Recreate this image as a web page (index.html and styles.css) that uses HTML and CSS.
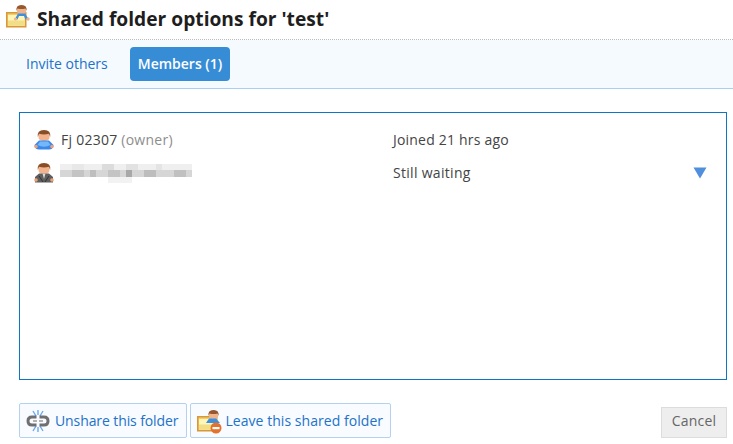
FILE: index.html
```html
<!DOCTYPE html>
<html lang="en">
<head>
<meta charset="utf-8">
<title>Shared folder options</title>
<link rel="stylesheet" href="styles.css">
</head>
<body>
<svg width="0" height="0" class="defs">
  <defs>
    <g id="folder">
      <rect x="0.75" y="0.75" width="19" height="14" fill="#f6cf68" stroke="#d8973a" stroke-width="1.5"/>
      <rect x="2" y="3" width="16.5" height="10.5" fill="#fdf6b8"/>
      <rect x="2" y="8.5" width="16.5" height="5" fill="#f2de86"/>
    </g>
    <g id="head">
      <path d="M1 4.5 Q1 0.5 5.5 0.5 T10 4.5 V6 Q10 9.5 5.5 9.5 T1 6Z" fill="#f0b48c"/>
      <path d="M0.5 6 Q-0.5 0 5.5 0 T10.5 6 L9.5 3.4 Q5.5 4.6 1.5 3.4Z" fill="#96562e"/>
    </g>
    <g id="avatar-head">
      <path d="M4.5 4.5 Q4.5 0.5 10 0.5 T15.5 4.5 V7 Q15.5 11 10 11 T4.5 7Z" fill="#f1b48c"/>
      <path d="M3.8 7 Q2.8 0 10 0 T16.2 7 L15 3.8 Q10 5.4 5 3.8Z" fill="#8a4e26"/>
    </g>
  </defs>
</svg>
<div class="dialog">
  <header class="head">
    <svg class="head-icon" width="24" height="24" viewBox="0 0 24 24">
      <use href="#folder" y="8"/>
      <use href="#head" x="10" y="1"/>
      <path d="M9.5 14 L12 9.5 H19 L22 14 V15.5 H19.5 L18 12 H13 L11.5 15.5 H9.5Z" fill="#3d8fe0"/>
      <circle cx="22" cy="15" r="1.7" fill="#f0b48c"/>
      <circle cx="9.5" cy="15" r="1.6" fill="#f0b48c"/>
    </svg>
    <h1 class="title">Shared folder options for 'test'</h1>
  </header>
  <nav class="tabs">
    <a class="tab">Invite others</a>
    <a class="tab tab-active">Members (1)</a>
  </nav>
  <main class="panel-wrap">
    <section class="panel">
      <div class="row row-first">
        <span class="who">
          <svg class="avatar" width="20" height="20" viewBox="0 0 20 20">
            <use href="#avatar-head"/>
            <path d="M5 10.5 H15 L19.5 15 Q19 19.5 15 19.5 H5 Q1 19.5 0.5 15Z" fill="#3b88ea"/>
            <path d="M6 11.5 H14 L16.5 15 Q10 18.5 3.5 15Z" fill="#72b8fb"/>
            <circle cx="2" cy="16.5" r="1.8" fill="#e9a27a"/>
            <circle cx="18" cy="16.5" r="1.8" fill="#e9a27a"/>
          </svg>
          <span class="name">Fj 02307 <span class="owner">(owner)</span></span>
        </span>
        <span class="status">Joined 21 hrs ago</span>
      </div>
      <div class="row row-second">
        <span class="who">
          <svg class="avatar" width="20" height="20" viewBox="0 0 20 20">
            <use href="#avatar-head"/>
            <path d="M5 10.5 H15 L19 14 V19.5 H1 V14Z" fill="#5e5e5e"/>
            <path d="M8.5 10.5 H11.5 L10 16Z" fill="#d8d8d8"/>
            <path d="M5 13 L9 19 M15 13 L11 19" stroke="#333" fill="none"/>
            <circle cx="2" cy="17" r="1.8" fill="#e9a27a"/>
            <circle cx="18" cy="17" r="1.8" fill="#e9a27a"/>
          </svg>
          <svg class="mosaic" width="132" height="19" viewBox="0 0 132 19" role="img" aria-label="Obscured name">
            <rect x="0" y="0" width="132" height="6" fill="#efefef"/>
            <rect x="12" y="0" width="12" height="6" fill="#e8e8e8"/>
            <rect x="42" y="0" width="12" height="6" fill="#dcdcdc"/>
            <rect x="66" y="0" width="12" height="6" fill="#e2e2e2"/>
            <rect x="96" y="0" width="6" height="6" fill="#e4e4e4"/>
            <rect x="0" y="6" width="132" height="7" fill="#d6d6d6"/>
            <rect x="12" y="6" width="12" height="7" fill="#c4c4c4"/>
            <rect x="30" y="6" width="6" height="7" fill="#bebebe"/>
            <rect x="48" y="6" width="12" height="7" fill="#c4c4c4"/>
            <rect x="66" y="6" width="6" height="7" fill="#a8a8a8"/>
            <rect x="84" y="6" width="12" height="7" fill="#bdbdbd"/>
            <rect x="114" y="6" width="12" height="7" fill="#c0c0c0"/>
            <rect x="48" y="13" width="24" height="6" fill="#f2f2f2"/>
          </svg>
        </span>
        <span class="status status-wait">Still waiting</span>
        <svg class="arrow" width="14" height="12" viewBox="0 0 14 12"><path d="M0.5 .5 H13.5 L7 11.5Z" fill="#4f8fdc"/></svg>
      </div>
    </section>
  </main>
  <footer class="foot">
    <a class="btn btn-unshare">
      <svg width="24" height="24" viewBox="0 0 24 24">
        <path d="M7 2 L10 7 M17 2 L14 7 M12 1 V6 M7 22 L10 17 M17 22 L14 17 M12 23 V18" stroke="#6fa8ef" stroke-width="1.4" fill="none"/>
        <path d="M10.5 8 H6 Q2 8 2 12 T6 16 H10.5" fill="none" stroke="#6f6f6f" stroke-width="3"/>
        <path d="M13.5 8 H18 Q22 8 22 12 T18 16 H13.5" fill="none" stroke="#6f6f6f" stroke-width="3"/>
        <path d="M7 12 H11 M13 12 H17" stroke="#9a9a9a" stroke-width="1.6"/>
      </svg>
      <span class="btn-text">Unshare this folder</span>
    </a>
    <a class="btn btn-leave">
      <svg width="26" height="26" viewBox="0 0 26 26">
        <use href="#folder" x="1" y="8"/>
        <use href="#head" x="12" y="2"/>
        <path d="M10 15 L13 10.5 H20 L24 15Z" fill="#3d8fe0"/>
        <circle cx="20" cy="20" r="5.5" fill="#e4722c"/>
        <rect x="16.5" y="19" width="7" height="2.2" fill="#fff"/>
      </svg>
      <span class="btn-text">Leave this shared folder</span>
    </a>
    <a class="btn-cancel">Cancel</a>
  </footer>
</div>
</body>
</html>
```
FILE: styles.css
```css
html, body {
  margin: 0;
  padding: 0;
  background: #fff;
}
body {
  font-family: "Open Sans", "Noto Sans", "Liberation Sans", sans-serif;
  width: 733px;
  height: 444px;
  overflow: hidden;
}
.defs {
  display: block;
  height: 0;
}
.dialog {
  display: flex;
  flex-direction: column;
  height: 444px;
}
.head {
  display: flex;
  align-items: center;
  gap: 7px;
  box-sizing: border-box;
  height: 40px;
  padding-left: 6px;
  border-bottom: 1px dotted #bdbdbd;
}
.head-icon {
  flex: none;
  margin-top: -8px;
}
.title {
  margin: 0;
  margin-top: -3px;
  font-size: 19.2px;
  font-weight: 700;
  color: #1e1e1e;
}
.tabs {
  display: flex;
  align-items: center;
  gap: 14px;
  height: 48px;
  padding-left: 18px;
  background: #f5fafe;
  border-bottom: 1px solid #a9d0f0;
}
.tab {
  padding: 7px 8px;
  height: 20px;
  line-height: 20px;
  font-size: 14px;
  color: #2272c8;
  border-radius: 4px;
}
.tab-active {
  background: #378cd6;
  color: #fff;
  font-weight: 600;
}
.panel-wrap {
  padding: 23px 6px 0 19px;
}
.panel {
  box-sizing: border-box;
  height: 268px;
  border: 1px solid #0e76c2;
  padding-top: 10px;
}
.row {
  display: flex;
  align-items: center;
  height: 33px;
  font-size: 14px;
  color: #444;
}
.who {
  display: flex;
  align-items: center;
  gap: 7px;
  width: 373px;
  padding-left: 14px;
  box-sizing: border-box;
}
.avatar {
  flex: none;
}
.name {
  letter-spacing: 0.25px;
}
.owner {
  color: #8d8d8d;
}
.status {
  letter-spacing: 0.2px;
}
.status-wait {
  letter-spacing: 0.3px;
}
.mosaic {
  flex: none;
  margin-top: 2px;
  margin-left: -1px;
}
.arrow {
  margin-left: auto;
  margin-right: 19px;
}
.foot {
  display: flex;
  align-items: flex-end;
  gap: 3px;
  padding: 23px 6px 0 19px;
}
.btn {
  display: flex;
  align-items: center;
  gap: 5px;
  box-sizing: border-box;
  height: 35px;
  padding: 0 7px 0 6px;
  background: #f8fbff;
  border: 1px solid #b4d2ee;
  border-radius: 2px;
  font-size: 14px;
  color: #2272c8;
}
.btn-text {
  letter-spacing: -0.1px;
}
.btn-unshare {
  padding-right: 8px;
}
.btn-leave {
  gap: 3px;
  padding-left: 5px;
}
.btn-leave .btn-text {
  letter-spacing: 0.05px;
}
.btn-cancel {
  margin-left: auto;
  box-sizing: border-box;
  width: 66px;
  height: 31px;
  line-height: 26px;
  text-align: center;
  background: #eee;
  border: 1px solid #dcdcdc;
  font-size: 14px;
  color: #666;
  letter-spacing: 0.2px;
}
```
